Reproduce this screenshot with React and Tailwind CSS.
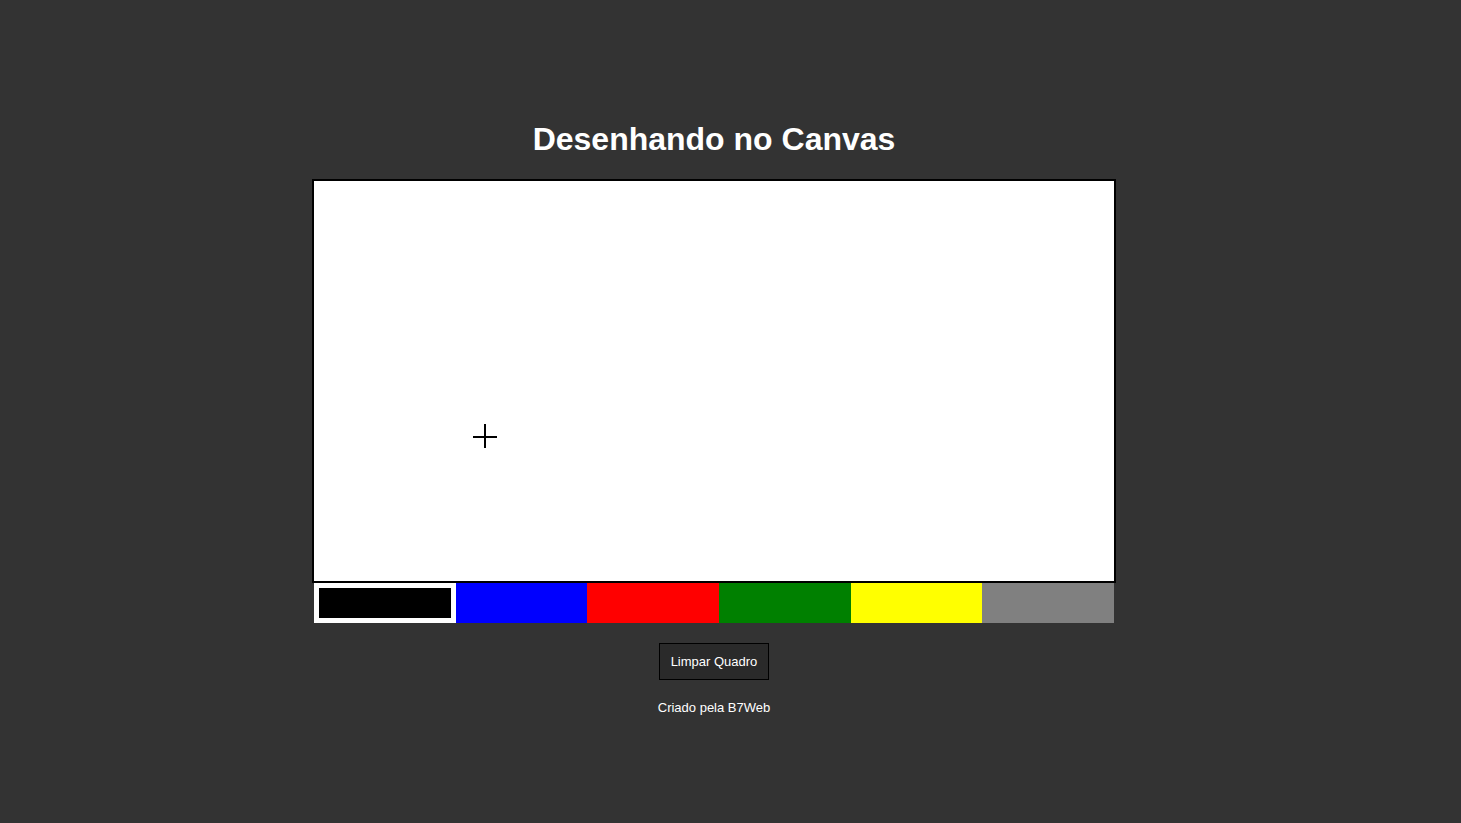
import React from "react";

const colors = ["#000000", "#0000ff", "#ff0000", "#008000", "#ffff00", "#808080"];

export default function App() {
  return (
    <div
      className="min-h-screen w-full bg-[#333333] text-white flex flex-col items-center pr-[33px]"
      style={{ fontFamily: '"Liberation Sans", Arial, sans-serif' }}
    >
      <h1 className="mt-[121px] mb-[21px] text-[32px] leading-[37px] font-bold">
        Desenhando no Canvas
      </h1>
      <div className="flex flex-col">
        <div className="relative w-[804px] h-[404px] border-2 border-black bg-white">
          <svg
            className="absolute left-[159px] top-[243px]"
            width="26"
            height="26"
            viewBox="0 0 26 26"
          >
            <rect x="0" y="12" width="24" height="2" fill="#000" />
            <rect x="11" y="0" width="2" height="24" fill="#000" />
          </svg>
        </div>
        <div className="flex w-[800px] h-[40px] ml-[2px]">
          {colors.map((c, i) => (
            <div
              key={c}
              className={i === 0 ? "flex-1 border-[5px] border-white" : "flex-1"}
              style={{ backgroundColor: c }}
            />
          ))}
        </div>
      </div>
      <button className="mt-[20px] border border-black bg-[#2a2a2a] text-white text-[13px] leading-[15px] px-[11px] py-[10px]">
        Limpar Quadro
      </button>
      <div className="mt-[20px] text-[13px] leading-[15px]">Criado pela B7Web</div>
    </div>
  );
}
